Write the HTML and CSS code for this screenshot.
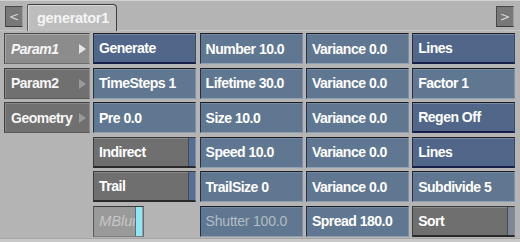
FILE: index.html
```html
<!DOCTYPE html>
<html lang="en">
<head>
    <meta charset="UTF-8">
    <title>generator1</title>
    <link rel="stylesheet" href="styles.css">
</head>
<body>
    <div class="panel">
        <div class="tabbar">
            <button class="arrow">&lt;</button>
            <div class="tab">generator1</div>
            <div class="spacer"></div>
            <button class="arrow">&gt;</button>
        </div>
        <div class="grid">
            <div class="btn menu current">Param1<span class="tri"></span></div>
            <div class="btn dark">Generate</div>
            <div class="btn">Number 10.0</div>
            <div class="btn">Variance 0.0</div>
            <div class="btn dark">Lines</div>

            <div class="btn menu">Param2<span class="tri"></span></div>
            <div class="btn">TimeSteps 1</div>
            <div class="btn">Lifetime 30.0</div>
            <div class="btn">Variance 0.0</div>
            <div class="btn">Factor 1</div>

            <div class="btn menu">Geometry<span class="tri"></span></div>
            <div class="btn">Pre 0.0</div>
            <div class="btn">Size 10.0</div>
            <div class="btn">Variance 0.0</div>
            <div class="btn dark">Regen Off</div>

            <div class="empty"></div>
            <div class="btn toggle">Indirect<span class="strip"></span></div>
            <div class="btn">Speed 10.0</div>
            <div class="btn">Variance 0.0</div>
            <div class="btn dark">Lines</div>

            <div class="empty"></div>
            <div class="btn toggle">Trail<span class="strip"></span></div>
            <div class="btn">TrailSize 0</div>
            <div class="btn">Variance 0.0</div>
            <div class="btn">Subdivide 5</div>

            <div class="empty"></div>
            <div class="cell">
                <div class="btn toggle off">MBlur<span class="strip"></span></div>
            </div>
            <div class="btn disabled">Shutter 100.0</div>
            <div class="btn">Spread 180.0</div>
            <div class="btn toggle sort">Sort<span class="strip"></span></div>
        </div>
        <div class="bottom"></div>
    </div>
</body>
</html>
```
FILE: styles.css
```css
* {
    margin: 0;
    padding: 0;
    box-sizing: border-box;
}
body {
    width: 520px;
    height: 242px;
    background: #b4b4b4;
    font-family: "Liberation Sans", Arial, sans-serif;
    overflow: hidden;
}
.panel {
    display: flex;
    flex-direction: column;
    height: 242px;
    border-top: 1px solid #d2d2d2;
}
.tabbar {
    display: flex;
    align-items: flex-end;
    height: 30px;
    padding: 0 6px 0 5px;
    border-bottom: 1px solid #c4c4c4;
}
.arrow {
    width: 18px;
    height: 21px;
    margin-bottom: 3px;
    background: #787878;
    border: 1px solid #4a4a4a;
    border-right-color: #a0a0a0;
    border-bottom-color: #3a3a3a;
    color: #d8d8d8;
    font-family: "DejaVu Sans", sans-serif;
    font-size: 12px;
    cursor: pointer;
}
.tab {
    width: 90px;
    height: 27px;
    margin-left: 4px;
    margin-bottom: -1px;
    padding: 5px 0 0 9px;
    background: #bdbdbd;
    border: 1px solid #3c3c3c;
    border-bottom: none;
    border-left-color: #5a5a5a;
    border-top-right-radius: 4px;
    border-top-left-radius: 2px;
    box-shadow: inset 1px 1px 0 #d8d8d8;
    color: #f4f4f4;
    font-weight: bold;
    font-size: 14.5px;
    letter-spacing: -0.3px;
}
.spacer {
    flex: 1;
}
.grid {
    display: grid;
    grid-template-columns: 86px repeat(4, 103px);
    grid-auto-rows: 31px;
    column-gap: 3.3px;
    row-gap: 3.6px;
    padding: 2px 0 0 4px;
}
.grid > .btn:nth-child(5n+2) {
    margin-left: -0.3px;
}
.btn {
    position: relative;
    display: flex;
    align-items: center;
    padding-left: 5px;
    background: #5f7790;
    border: 1px solid #263040;
    border-top-color: #1c1c20;
    border-right-color: #7d8ea2;
    border-bottom-color: #8fa0b2;
    box-shadow: inset 0 1px 0 #7088a2;
    color: #ffffff;
    font-weight: bold;
    font-size: 14px;
    letter-spacing: -0.5px;
    white-space: nowrap;
}
.btn.dark {
    background: #506789;
    border-bottom: 2px solid #16204a;
    border-right-color: #3a4a66;
}
.btn.menu {
    padding-left: 6px;
    background: #707070;
    border-color: #404040 #8c8c8c #5a5a5a #404040;
    box-shadow: inset 1px 1px 0 #888888;
    color: #f6f6f6;
}
.btn.menu.current {
    background: #8c8c8c;
    border-color: #4a4a4a #a8a8a8 #6a6a6a #4a4a4a;
    box-shadow: inset 1px 1px 0 #a6a6a6;
    font-style: italic;
}
.tri {
    position: absolute;
    right: 3px;
    top: 10px;
    border-left: 7px solid #9a9a9a;
    border-top: 5px solid transparent;
    border-bottom: 5px solid transparent;
}
.current .tri {
    border-left-color: #e6e6e6;
}
.btn.toggle {
    background: #6f6f6f;
    border-color: #3a3a3a #8a8a8a #2a2a2a #3a3a3a;
    border-bottom-width: 2px;
    box-shadow: inset 0 1px 0 #8a8a8a;
}
.strip {
    position: absolute;
    right: 0;
    top: 0;
    bottom: 0;
    width: 7px;
    background: #54709a;
    border-left: 1px solid #4a4a4a;
}
.btn.sort .strip {
    background: #7c8898;
}
.cell {
    display: flex;
}
.btn.off {
    width: 51px;
    background: #9a9a9a;
    border-color: #3a3a3a #6a6a6a #7c7c7c #5a5a5a;
    border-bottom-width: 1px;
    box-shadow: none;
    color: #c6c6c6;
    font-style: italic;
    font-weight: normal;
    font-size: 14.5px;
    letter-spacing: 0;
    padding-left: 5px;
}
.btn.off .strip {
    right: 1px;
    background: #8ee6f6;
    border-left: 1px solid #6a6a6a;
}
.btn.disabled {
    color: #b4bcc6;
    font-weight: normal;
    letter-spacing: -0.2px;
}
.empty {
    background: transparent;
}
.bottom {
    flex: 1;
    margin-top: 1px;
    background: #c8c8c8;
    border-top: 1px solid #a6a6a6;
}
```
